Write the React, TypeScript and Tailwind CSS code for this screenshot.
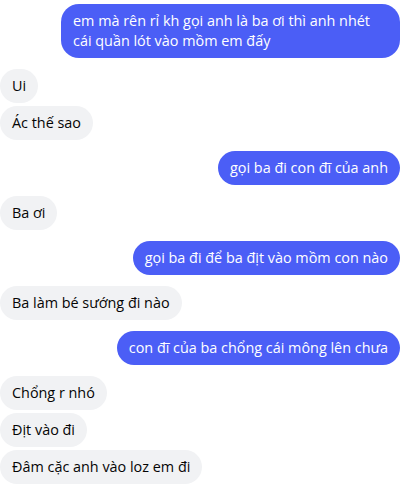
const messages = [
  { me: true, text: 'em mà rên rỉ kh gọi anh là ba ơi thì anh nhét cái quần lót vào mồm em đấy', gap: false },
  { me: false, text: 'Ui', gap: true },
  { me: false, text: 'Ác thế sao', gap: false },
  { me: true, text: 'gọi ba đi con đĩ của anh', gap: true },
  { me: false, text: 'Ba ơi', gap: true },
  { me: true, text: 'gọi ba đi để ba địt vào mồm con nào', gap: true },
  { me: false, text: 'Ba làm bé sướng đi nào', gap: true },
  { me: true, text: 'con đĩ của ba chổng cái mông lên chưa', gap: true },
  { me: false, text: 'Chổng r nhó', gap: true },
  { me: false, text: 'Địt vào đi', gap: false },
  { me: false, text: 'Đâm cặc anh vào loz em đi', gap: false },
]

export default function App() {
  return (
    <div
      className="w-[406px] h-[495px] bg-white flex flex-col pt-[4px] pr-[6px] overflow-hidden"
      style={{ fontFamily: '"Segoe UI", "Open Sans", sans-serif' }}
    >
      {messages.map((m, i) => (
        <div
          key={i}
          className={`flex ${m.me ? 'justify-end' : 'justify-start'} ${i === 0 ? '' : m.gap ? 'mt-[11px]' : 'mt-[3px]'}`}
        >
          <div
            className={`px-[12px] py-[7px] text-[14.4px] leading-[20px] rounded-[18px] ${
              m.me ? 'bg-[#4b5ef6] text-white max-w-[339px]' : 'bg-[#f1f2f4] text-[#050505]'
            }`}
          >
            {m.text}
          </div>
        </div>
      ))}
    </div>
  )
}
